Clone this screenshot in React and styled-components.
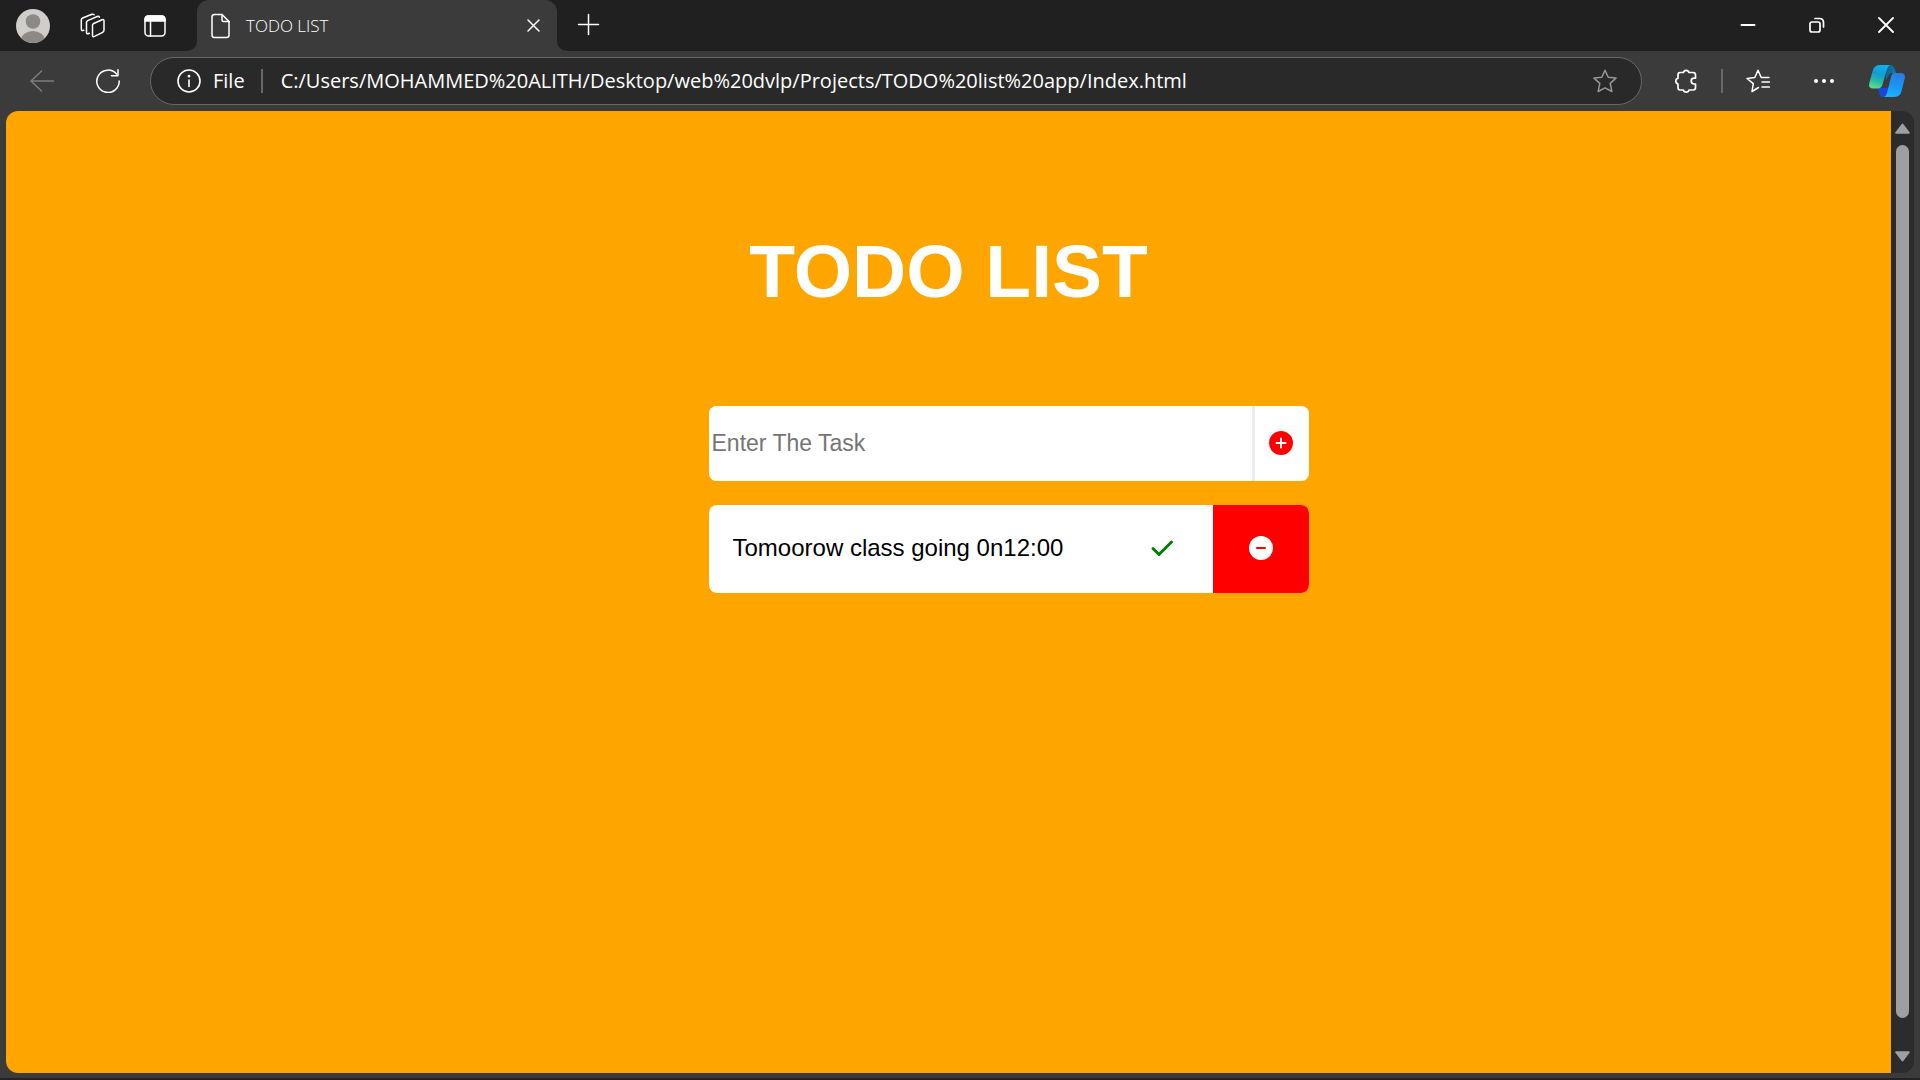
import React, { useState } from "react";
import styled, { createGlobalStyle } from "styled-components";

const colors = {
  strip: "#202020",
  chrome: "#3b3b3b",
  field: "#292929",
  line: "#686868",
  page: "#ffa500",
  red: "#ff0000",
  scroll: "#2c2c2c",
  thumb: "#9f9f9f",
};

const GlobalStyle = createGlobalStyle`
  *, *::before, *::after { box-sizing: border-box; }
  html { height: 100%; }
  body {
    margin: 0;
    background: ${colors.chrome};
    font-family: "Liberation Sans", Arial, sans-serif;
  }
  h1, ul { margin: 0; padding: 0; }
  button { font: inherit; }
`;

const Window = styled.div`
  display: flex;
  flex-direction: column;
  min-height: 100vh;
  background: ${colors.chrome};
  border-bottom: 2px solid #242224;
`;

const uiFont = `"Open Sans", "Noto Sans", sans-serif`;

const TabStrip = styled.header`
  display: flex;
  height: 51px;
  font-family: ${uiFont};
`;

const StripStart = styled.div`
  display: flex;
  align-items: center;
  gap: 30px;
  padding: 0 31px 0 16px;
  background: ${colors.strip};
  border-bottom-right-radius: 10px;
`;

const TabTools = styled.div`
  display: flex;
  align-items: center;
  gap: 38px;
`;

const StripEnd = styled.div`
  display: flex;
  flex: 1;
  align-items: center;
  justify-content: space-between;
  padding: 0 26px 2px 20px;
  background: ${colors.strip};
  border-bottom-left-radius: 10px;
`;

const WindowControls = styled.div`
  display: flex;
  align-items: center;
  gap: 53px;
`;

const TabSlot = styled.div`
  width: 360px;
  background: linear-gradient(${colors.strip} 50%, ${colors.chrome} 50%);
`;

const Tab = styled.div`
  display: flex;
  align-items: center;
  height: 100%;
  padding: 0 16px 0 13px;
  background: ${colors.chrome};
  border-radius: 12px 12px 0 0;
  color: #ffffff;
`;

const TabTitle = styled.span`
  flex: 1;
  padding-left: 16px;
  font-size: 17px;
  font-weight: 300;
  line-height: 24px;
`;

const IconButton = styled.button`
  display: flex;
  flex: none;
  padding: 0;
  border: 0;
  background: none;
  color: ${(p) => p.$tone || "#ffffff"};
  cursor: pointer;
`;

const Toolbar = styled.nav`
  display: flex;
  align-items: center;
  height: 60px;
  padding: 0 15px 0 30px;
  font-family: ${uiFont};
`;

const NavButtons = styled.div`
  display: flex;
  gap: 42px;
  padding-right: 30px;
`;

const AddressBar = styled.div`
  display: flex;
  flex: 1;
  align-items: center;
  height: 48px;
  padding: 0 24px 0 26px;
  background: ${colors.field};
  border: 1px solid ${colors.line};
  border-radius: 24px;
  color: #ffffff;
`;

const Scheme = styled.label`
  padding: 0 16px 0 12px;
  font-size: 20px;
  line-height: 28px;
`;

const Divider = styled.span`
  width: 2px;
  height: 24px;
  background: #686868;
`;

const AddressInput = styled.input`
  flex: 1;
  min-width: 0;
  padding: 0 0 0 18px;
  border: 0;
  outline: 0;
  background: none;
  color: #ffffff;
  font: 400 20px/28px ${uiFont};
`;

const Actions = styled.div`
  display: flex;
  align-items: center;
  gap: 23px;
  padding-left: 32px;
`;

const MenuButtons = styled.div`
  display: flex;
  align-items: center;
  gap: 33px;
  padding-left: 19px;
`;

const Viewport = styled.div`
  display: flex;
  flex: 1;
  margin: 0 6px 5px;
  overflow: hidden;
  background: ${colors.scroll};
  border-radius: 12px;
`;

const Page = styled.main`
  flex: 1;
  background: ${colors.page};
`;

const Heading = styled.h1`
  padding: 118px 0 92px;
  color: #ffffff;
  font-size: 75px;
  font-weight: 700;
  line-height: 85px;
  text-align: center;
`;

const Board = styled.section`
  display: flex;
  justify-content: center;
  padding-left: 120px;
`;

const Stack = styled.div`
  display: flex;
  flex-direction: column;
  gap: 24px;
  width: 600px;
  max-width: 100%;
`;

const TaskForm = styled.form`
  display: flex;
  height: 75px;
  overflow: hidden;
  background: #ffffff;
  border-radius: 8px;
`;

const TaskInput = styled.input`
  flex: 1;
  min-width: 0;
  padding: 0 3px;
  border: 0;
  border-right: 3px solid #efefef;
  outline: 0;
  font: 400 23px "Liberation Sans", Arial, sans-serif;

  &::placeholder { color: #757575; }
`;

const AddButton = styled.button`
  display: flex;
  align-items: center;
  justify-content: center;
  width: 54px;
  padding: 0 2px 2px 0;
  border: 0;
  background: #ffffff;
  color: ${colors.red};
`;

const TaskList = styled.ul`
  display: flex;
  flex-direction: column;
  gap: 24px;
  list-style: none;
`;

const TaskItem = styled.li`
  display: flex;
  align-items: stretch;
  height: 88px;
  overflow: hidden;
  background: #ffffff;
  border-radius: 8px;
`;

const TaskText = styled.span`
  flex: 1;
  align-self: center;
  padding: 0 0 2px 24px;
  color: #000000;
  font-size: 24px;
  line-height: 28px;
`;

const TaskButton = styled.button`
  display: flex;
  align-items: center;
  justify-content: center;
  width: ${(p) => (p.$danger ? 96 : 102)}px;
  padding: 0 0 2px;
  border: 0;
  background: ${(p) => (p.$danger ? colors.red : "#ffffff")};
  color: ${(p) => (p.$danger ? "#ffffff" : "#008000")};
`;

const Scrollbar = styled.div`
  display: flex;
  flex-direction: column;
  align-items: center;
  gap: 11px;
  width: 23px;
  padding: 12px 0 11px;
`;

const Track = styled.div`
  flex: 1;
  width: 13px;
`;

const Thumb = styled.div`
  height: 97.5%;
  background: ${colors.thumb};
  border-radius: 7px;
`;

const Svg = ({ w = 24, h = 24, sw = 1.5, children }) => (
  <svg
    width={w}
    height={h}
    viewBox={`0 0 ${w} ${h}`}
    fill="none"
    stroke="currentColor"
    strokeWidth={sw}
    strokeLinecap="round"
    strokeLinejoin="round"
    aria-hidden="true"
  >
    {children}
  </svg>
);

const AvatarIcon = () => (
  <Svg w={34} h={34}>
    <clipPath id="avatar"><circle cx="17" cy="17" r="17" /></clipPath>
    <g clipPath="url(#avatar)" stroke="none">
      <rect width="34" height="34" fill="#d0cecb" />
      <circle cx="17" cy="12.5" r="7.3" fill="#8d8986" />
      <ellipse cx="17" cy="31.5" rx="12" ry="9.5" fill="#8d8986" />
    </g>
  </Svg>
);

const WorkspacesIcon = () => (
  <Svg w={26} h={26}>
    <path d="M13.200 10.800 22 6.700q2-.8 2 1.200v9.200q0 1.600-1.300 2.200l-8.200 4.100q-2 .9-2-1.200V12.200q0-1 .7-1.400Z" />
    <path d="M9.300 20.200 8.200 20.700q-1.700.6-1.700-1.200V9.500q0-1.300 1.200-1.900l9.500-4.100q1.500-.5 2.200.7" />
    <path d="M3.800 17.200l-.8.300q-1.700.3-1.700-1.400V6.900q0-1.400 1.300-1.900l9.400-3.700q1.400-.4 2.100.5" />
  </Svg>
);

const PanelIcon = () => (
  <Svg w={22} h={22}>
    <rect x="1" y="1" width="20" height="20" rx="3.5" />
    <path d="M1 6V4.500Q1 1 4.500 1h13Q21 1 21 4.500V6Z" fill="currentColor" />
    <path d="M6.500 6v15" />
  </Svg>
);

const FileIcon = () => (
  <Svg w={20} h={26}>
    <path d="M4.500 1.500h7.500l7 7V22q0 2.500-2.500 2.500h-12Q2 24.500 2 22V4Q2 1.500 4.500 1.500Z" />
    <path d="M12 1.500V7q0 1.500 1.500 1.500H19" />
  </Svg>
);

const BackIcon = () => (
  <Svg><path d="M23.500 12H1M11.500 2 1 12l10.500 10" /></Svg>
);

const ReloadIcon = () => (
  <Svg><path d="M20.500 5A11.200 11.200 0 1 0 23.200 12M22 .800v6h-6.500" /></Svg>
);

const InfoIcon = () => (
  <Svg sw={1.6}>
    <circle cx="12" cy="12" r="11" />
    <path d="M12 11v6.500" />
    <circle cx="12" cy="7.200" r=".6" fill="currentColor" />
  </Svg>
);

const StarIcon = () => (
  <Svg><path d="m12 1.200 3.200 7.100 7.800.8-5.800 5.300 1.700 8.100L12 18.800l-6.900 3.700 1.700-8.100L1 9.100l7.800-.8Z" /></Svg>
);

const ExtensionsIcon = () => (
  <Svg sw={1.7}>
    <path d="M6 3.500h3.400a2.900 2.900 0 0 1 5.600 0h4.100q2.400 0 2.400 2.400v3.300h-1.400a2.900 2.900 0 0 0 0 5.800h1.400v3.600q0 2.400-2.400 2.400H15a2.900 2.900 0 0 1-5.600 0H6q-2 0-2-2.400V15a3 3 0 0 1 0-5.800V5.900Q4 3.500 6 3.500Z" />
  </Svg>
);

const FavoritesIcon = () => (
  <Svg>
    <path d="M12.500 18.500 6 22.500l1.300-7.800L1 9.500l7.800-1L12 1.200l3.200 7.300H23M16 13h7.500M16 18h7.500" />
  </Svg>
);

const DotsIcon = () => (
  <Svg>
    <g fill="currentColor" stroke="none">
      <circle cx="4" cy="12" r="2" />
      <circle cx="12" cy="12" r="2" />
      <circle cx="20" cy="12" r="2" />
    </g>
  </Svg>
);

const CopilotIcon = () => (
  <Svg w={36} h={32}>
    <defs>
      <linearGradient id="leftRibbon" x1="0.6" y1="0" x2="0.3" y2="1">
        <stop offset="0" stopColor="#0cb4ea" />
        <stop offset=".4" stopColor="#159bd3" />
        <stop offset=".7" stopColor="#2cb9a6" />
        <stop offset="1" stopColor="#5fdc8a" />
      </linearGradient>
      <linearGradient id="rightRibbon" x1="0.6" y1="0" x2="0.4" y2="1">
        <stop offset="0" stopColor="#2a7be0" />
        <stop offset=".5" stopColor="#1b93f2" />
        <stop offset="1" stopColor="#17b4ff" />
      </linearGradient>
      <linearGradient id="topFold" x1="0" y1="0" x2="1" y2="0.4">
        <stop offset="0" stopColor="#0a5c8a" />
        <stop offset="1" stopColor="#0e7fb4" />
      </linearGradient>
    </defs>
    <g stroke="none">
      <path d="M17 0h4q3 0 4.300 3.300L27 8h-4.500q-2 0-2.700 2L17 15Z" fill="url(#topFold)" />
      <path d="M9 23h9l4-4-4 13h-4q-2.800 0-3.700-3.500Z" fill="#1848d8" />
      <path d="M11 0h10q-2 .8-3 4l-4.500 15.500Q12.400 23.500 9 23.500H4q-5 0-3.700-5.500l3.500-12.500Q5.300 0 11 0Z" fill="url(#leftRibbon)" />
      <path d="M25 8h6.500q5.500 0 4.200 5.500l-3.200 12.800Q31 32 25.500 32H15q2-.8 3-4l4.300-17Q23 8 25 8Z" fill="url(#rightRibbon)" />
    </g>
  </Svg>
);

const CircleIcon = ({ mark, plus }) => (
  <Svg sw={2}>
    <circle cx="12" cy="12" r="12" fill="currentColor" stroke="none" />
    <path d={plus ? "M7.500 12h9M12 7.500v9" : "M8 12h8"} stroke={mark} />
  </Svg>
);

const Arrow = ({ down }) => (
  <Svg w={15} h={11} sw={2}>
    <path
      d={down ? "M1.200 1.200h12.600L7.500 9.500Z" : "M1.200 9.800h12.600L7.500 1.500Z"}
      fill={colors.thumb}
      stroke={colors.thumb}
    />
  </Svg>
);

export default function App() {
  const [draft, setDraft] = useState("");
  const [tasks, setTasks] = useState(["Tomoorow class going 0n12:00"]);

  const addTask = (event) => {
    event.preventDefault();
    if (!draft.trim()) return;
    setTasks([...tasks, draft.trim()]);
    setDraft("");
  };

  return (
    <>
      <GlobalStyle />
      <Window>
        <TabStrip>
          <StripStart>
            <IconButton aria-label="Profile"><AvatarIcon /></IconButton>
            <TabTools>
              <IconButton aria-label="Workspaces"><WorkspacesIcon /></IconButton>
              <IconButton aria-label="Tab actions"><PanelIcon /></IconButton>
            </TabTools>
          </StripStart>
          <TabSlot>
            <Tab>
              <FileIcon />
              <TabTitle>TODO LIST</TabTitle>
              <IconButton aria-label="Close tab">
                <Svg w={15} h={15}><path d="M2 2l11 11M13 2 2 13" /></Svg>
              </IconButton>
            </Tab>
          </TabSlot>
          <StripEnd>
            <IconButton aria-label="New tab">
              <Svg w={23} h={23}><path d="M11.500 1.500v20M1.500 11.500h20" /></Svg>
            </IconButton>
            <WindowControls>
              <IconButton aria-label="Minimize">
                <Svg w={16} h={16} sw={2}><path d="M1.500 8h13" /></Svg>
              </IconButton>
              <IconButton aria-label="Restore">
                <Svg w={16} h={16} sw={1.7}>
                  <rect x="1" y="5" width="10" height="10" rx="2" />
                  <path d="M6 1.500h4.500q4 0 4 4V10" />
                </Svg>
              </IconButton>
              <IconButton aria-label="Close window">
                <Svg w={16} h={16} sw={1.8}><path d="M1 1l14 14M15 1 1 15" /></Svg>
              </IconButton>
            </WindowControls>
          </StripEnd>
        </TabStrip>

        <Toolbar>
          <NavButtons>
            <IconButton aria-label="Back" $tone="#7d7d7d"><BackIcon /></IconButton>
            <IconButton aria-label="Refresh"><ReloadIcon /></IconButton>
          </NavButtons>
          <AddressBar>
            <InfoIcon />
            <Scheme htmlFor="address">File</Scheme>
            <Divider />
            <AddressInput
              id="address"
              defaultValue="C:/Users/MOHAMMED%20ALITH/Desktop/web%20dvlp/Projects/TODO%20list%20app/Index.html"
            />
            <IconButton aria-label="Add to favorites" $tone="#959595"><StarIcon /></IconButton>
          </AddressBar>
          <Actions>
            <IconButton aria-label="Extensions"><ExtensionsIcon /></IconButton>
            <Divider />
            <IconButton aria-label="Favorites"><FavoritesIcon /></IconButton>
            <MenuButtons>
              <IconButton aria-label="Settings and more"><DotsIcon /></IconButton>
              <IconButton aria-label="Copilot"><CopilotIcon /></IconButton>
            </MenuButtons>
          </Actions>
        </Toolbar>

        <Viewport>
          <Page>
            <Heading>TODO LIST</Heading>
            <Board>
              <Stack>
                <TaskForm onSubmit={addTask}>
                  <TaskInput
                    aria-label="Enter The Task"
                    placeholder="Enter The Task"
                    value={draft}
                    onChange={(event) => setDraft(event.target.value)}
                  />
                  <AddButton aria-label="Add task"><CircleIcon mark="#ffffff" plus /></AddButton>
                </TaskForm>
                <TaskList>
                  {tasks.map((task, index) => (
                    <TaskItem key={index}>
                      <TaskText>{task}</TaskText>
                      <TaskButton aria-label="Complete task">
                        <Svg sw={3}><path d="m3 12.500 6 6L21.500 6" /></Svg>
                      </TaskButton>
                      <TaskButton
                        $danger
                        aria-label="Remove task"
                        onClick={() => setTasks(tasks.filter((_, i) => i !== index))}
                      >
                        <CircleIcon mark={colors.red} />
                      </TaskButton>
                    </TaskItem>
                  ))}
                </TaskList>
              </Stack>
            </Board>
          </Page>
          <Scrollbar>
            <Arrow />
            <Track><Thumb /></Track>
            <Arrow down />
          </Scrollbar>
        </Viewport>
      </Window>
    </>
  );
}
